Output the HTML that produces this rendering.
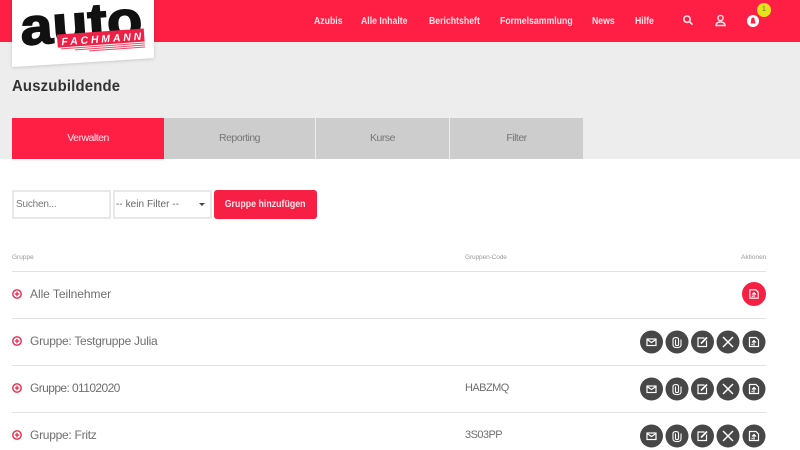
<!DOCTYPE html>
<html lang="de"><head><meta charset="utf-8"><title>Auszubildende</title>
<style>
*{box-sizing:border-box}
html,body{margin:0;padding:0;width:800px;height:450px;overflow:hidden;background:#fff;font-family:"Liberation Sans",sans-serif}
.abs{position:absolute;white-space:nowrap}
#page{position:relative;width:800px;height:450px;overflow:hidden;filter:blur(.35px)}
.hdr{left:0;top:0;width:800px;height:42px;background:#ff1f44}
.sub{left:0;top:42px;width:800px;height:117px;background:#ededed}
.nav{top:14px;color:#ffe3e8;font-size:10.5px;font-weight:bold;line-height:14px;transform:scaleX(.83);transform-origin:left center}
h1{position:absolute;left:12px;top:77px;margin:0;font-size:16px;line-height:20px;font-weight:bold;color:#333;white-space:nowrap;transform:scaleX(.93);transform-origin:left center;letter-spacing:.2px}
.tab{top:118px;height:41px;background:#cdcdcd;color:#777;font-size:10.5px;line-height:40px;text-align:center;letter-spacing:-.5px}
.fld{top:190px;height:29px;background:#fff;border:2px solid #e8e8e8;font-size:10px;line-height:25px;color:#777;padding-left:2px}
.btn{left:214px;top:190px;width:103px;height:29px;background:#f81f45;border-radius:3px;color:#ffe3e8;font-size:10.5px;font-weight:bold;line-height:28px;text-align:center}
.btn span{display:inline-block;transform:scaleX(.84)}
.th{top:254px;font-size:6.5px;line-height:8px;color:#999}
.ln{left:12px;width:754px;height:1px;background:#e2e2e2}
.tx{left:30px;font-size:12px;line-height:16px;color:#6f6f6f;letter-spacing:-.27px}
.cd{left:465px;font-size:11px;line-height:16px;color:#6f6f6f;letter-spacing:-.55px}
svg{position:absolute;display:block}
</style></head><body><div id="page">
<div class="abs hdr"></div><div class="abs sub"></div>

<svg style="left:0;top:0" width="170" height="75" viewBox="0 0 170 75">
<defs><filter id="s" x="-10%" y="-10%" width="120%" height="125%"><feDropShadow dx="0" dy="1" stdDeviation="1.5" flood-color="#000" flood-opacity=".16"/></filter></defs>
<polygon points="12,0 154,0 154,58 12,67" fill="#fff" filter="url(#s)"/>
<g transform="rotate(-4 80 35)">
<text x="21" y="41" font-family="Liberation Sans" font-weight="bold" font-size="52" textLength="122" lengthAdjust="spacingAndGlyphs" stroke="#111" stroke-width="1.6" fill="#111">auto</text>
<polygon points="57,33 144,33 144,46 57,46" fill="#ef1f45"/>
<text x="61" y="44" font-family="Liberation Sans" font-weight="bold" font-style="italic" font-size="10.5" textLength="80" lengthAdjust="spacing" fill="#fff">FACHMANN</text>
<path d="M60 47.500H144M74 49.500H144M88 51.500H144" stroke="#ef4a67" stroke-width="1"/>
</g></svg>

<div class="abs nav" style="left:314px">Azubis</div>
<div class="abs nav" style="left:361px">Alle Inhalte</div>
<div class="abs nav" style="left:429px">Berichtsheft</div>
<div class="abs nav" style="left:500px">Formelsammlung</div>
<div class="abs nav" style="left:592px">News</div>
<div class="abs nav" style="left:635px">Hilfe</div>

<svg style="left:682px;top:14px" width="12" height="12" viewBox="0 0 12 12" fill="none" stroke="#ffe3e8" stroke-width="1.6"><circle cx="5" cy="5.2" r="3.2"/><path d="M7.4 7.6L10.5 10.7"/></svg>
<svg style="left:714px;top:14px" width="13" height="13" viewBox="0 0 13 13" fill="none" stroke="#ffe3e8" stroke-width="1.4"><circle cx="6.5" cy="4" r="2.6"/><path d="M2 11.5C2 9 4 8 6.5 8S11 9 11 11.5Z"/></svg>
<svg style="left:746px;top:14px" width="14" height="14" viewBox="0 0 14 14"><circle cx="7" cy="7" r="6" fill="#fff"/><path d="M7 3.5C5.6 3.5 5.2 5 5.2 6.5L4.5 9.5H9.5L8.8 6.5C8.8 5 8.400 3.500 7 3.500Z" fill="#ff1f44"/></svg>
<div class="abs" style="left:757px;top:3px;width:14px;height:14px;border-radius:50%;background:#e6e21a;color:#665;font-size:7px;line-height:14px;text-align:center">1</div>

<h1>Auszubildende</h1>
<div class="abs tab" style="left:12px;width:152px;background:#ff1f44;color:#ffe3e8">Verwalten</div>
<div class="abs tab" style="left:164px;width:151px">Reporting</div>
<div class="abs tab" style="left:316px;width:133px">Kurse</div>
<div class="abs tab" style="left:450px;width:133px">Filter</div>

<div class="abs fld" style="left:12px;width:99px;letter-spacing:-.2px">Suchen...</div>
<div class="abs fld" style="left:113px;width:99px;color:#666;padding-left:1px;letter-spacing:.05px">-- kein Filter --</div>
<div class="abs" style="left:199px;top:203px;width:0;height:0;border:3px solid transparent;border-top:3px solid #444;border-bottom:0"></div>
<div class="abs btn"><span>Gruppe hinzufügen</span></div>

<div class="abs th" style="left:12px">Gruppe</div>
<div class="abs th" style="left:465px;letter-spacing:-.1px">Gruppen-Code</div>
<div class="abs th" style="left:741px">Aktionen</div>
<div class="abs ln" style="top:271px"></div>
<div class="abs ln" style="top:318px"></div>
<div class="abs ln" style="top:365px"></div>
<div class="abs ln" style="top:412px"></div>

<div class="abs tx" style="top:286px;letter-spacing:-.05px">Alle Teilnehmer</div>
<div class="abs tx" style="top:333px">Gruppe: Testgruppe Julia</div>
<div class="abs tx" style="top:380px;letter-spacing:-.59px">Gruppe: 01102020</div>
<div class="abs tx" style="top:427px">Gruppe: Fritz</div>
<div class="abs cd" style="top:380px">HABZMQ</div>
<div class="abs cd" style="top:427px">3S03PP</div>

<svg width="0" height="0" style="left:0;top:0"><defs>
<g id="plus"><circle cx="5" cy="5" r="4.200" fill="none" stroke="#e8294d" stroke-width="1.400"/><path d="M2.800 5H7.200M5 2.800V7.200" stroke="#e8294d" stroke-width="1.300"/></g>
<g id="mail" fill="none" stroke="#fff" stroke-width="1.200"><rect x="8.500" y="10" width="9" height="6.500"/><path d="M8.500 10.500L13 13.500L17.500 10.500"/></g>
<g id="clip" fill="none" stroke="#fff" stroke-width="1.100"><path d="M11.500 10.500V15.500C11.500 17 14.500 17 14.500 15.500V10C14.500 8 9 8 9 10.500V16C9 19.500 17 19.500 17 16V10.500"/></g>
<g id="edit" fill="none" stroke="#fff" stroke-width="1.200"><path d="M15 9H8.500V17.500H17V11.500"/><path d="M11.500 14.500L17.500 8.500" stroke-width="1.800"/></g>
<g id="x" fill="none" stroke="#fff" stroke-width="1.500"><path d="M8 8L18 18M18 8L8 18"/></g>
<g id="doc" fill="none" stroke="#fff" stroke-width="1.200"><path d="M8.500 8.500H15L17.500 11V17.500H8.500Z"/><path d="M13 16.500V11.500M11 13.500L13 11.500L15 13.500M10.500 15.500H11.800"/></g>
</defs></svg>

<svg style="left:12px;top:289px" width="10" height="10"><use href="#plus"/></svg>
<svg style="left:12px;top:336px" width="10" height="10"><use href="#plus"/></svg>
<svg style="left:12px;top:383px" width="10" height="10"><use href="#plus"/></svg>
<svg style="left:12px;top:430px" width="10" height="10"><use href="#plus"/></svg>

<svg style="left:742px;top:282px" width="24" height="24" viewBox="0 0 26 26"><circle cx="13" cy="13" r="13" fill="#f81f45"/><use href="#doc"/></svg>

<svg style="left:640px;top:330px" width="126" height="24" viewBox="0 0 126 24"><g id="row"><circle cx="11.500" cy="12" r="11.500" fill="#474747"/><use href="#mail" transform="translate(-1.500 -1) "/><circle cx="37" cy="12" r="11.500" fill="#474747"/><use href="#clip" transform="translate(24 -1)"/><circle cx="62.500" cy="12" r="11.500" fill="#474747"/><use href="#edit" transform="translate(49.500 -1)"/><circle cx="88" cy="12" r="11.500" fill="#474747"/><use href="#x" transform="translate(75 -1)"/><circle cx="114" cy="12" r="11.500" fill="#474747"/><use href="#doc" transform="translate(101 -1)"/></g></svg>
<svg style="left:640px;top:377px" width="126" height="24" viewBox="0 0 126 24"><use href="#row"/></svg>
<svg style="left:640px;top:424px" width="126" height="24" viewBox="0 0 126 24"><use href="#row"/></svg>
</div></body></html>
